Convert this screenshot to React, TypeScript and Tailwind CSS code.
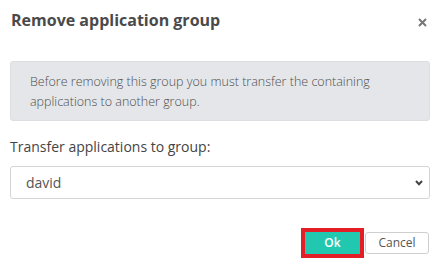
import React from 'react';

const App: React.FC = () => {
  return (
    <div className="w-[440px] h-[269px] bg-white font-['Open_Sans',sans-serif] text-[#444]">
      <div className="flex items-center justify-between pl-[11px] pr-[13px] pt-[10px]">
        <h2 className="text-[16px] leading-[20px] font-bold text-[#4a4a4a]">Remove application group</h2>
        <button className="mt-[5px] text-[#777]">
          <svg width="9" height="9" viewBox="0 0 9 9">
            <path d="M1 1L8 8M8 1L1 8" stroke="currentColor" strokeWidth="2" />
          </svg>
        </button>
      </div>

      <div className="mx-[10px] mt-[31px] h-[60px] rounded-[3px] border border-[#dcdee1] bg-[#e4e6e9] px-[19px] pt-[10px] text-[12.5px] font-light leading-[20px] text-[#4f4f4f]">
        Before removing this group you must transfer the containing applications to another group.
      </div>

      <div className="mx-[10px] mt-[16px]">
        <label className="block text-[14px] leading-[20px] text-[#444]">Transfer applications to group:</label>
        <div className="relative mt-[9px]">
          <select className="h-[33px] w-full appearance-none rounded-[3px] border border-[#d5d5d5] bg-white pl-[15px] text-[14px] text-[#555] outline-none">
            <option>david</option>
          </select>
          <svg className="pointer-events-none absolute right-[7px] top-[14px]" width="8" height="6" viewBox="0 0 8 6">
            <path d="M1 1L4 4.2L7 1" fill="none" stroke="#444" strokeWidth="2" />
          </svg>
        </div>
      </div>

      <div className="mt-[33px] flex justify-end gap-[5px] pr-[11px]">
        <button className="h-[22px] w-[55px] rounded-none bg-[#22c7b0] text-[12px] font-semibold text-white outline outline-[4px] outline-[#e41e26]">
          Ok
        </button>
        <button className="h-[22px] w-[64px] rounded-[3px] border border-[#cfcfcf] bg-white text-[12px] text-[#555]">
          Cancel
        </button>
      </div>
    </div>
  );
};

export default App;
